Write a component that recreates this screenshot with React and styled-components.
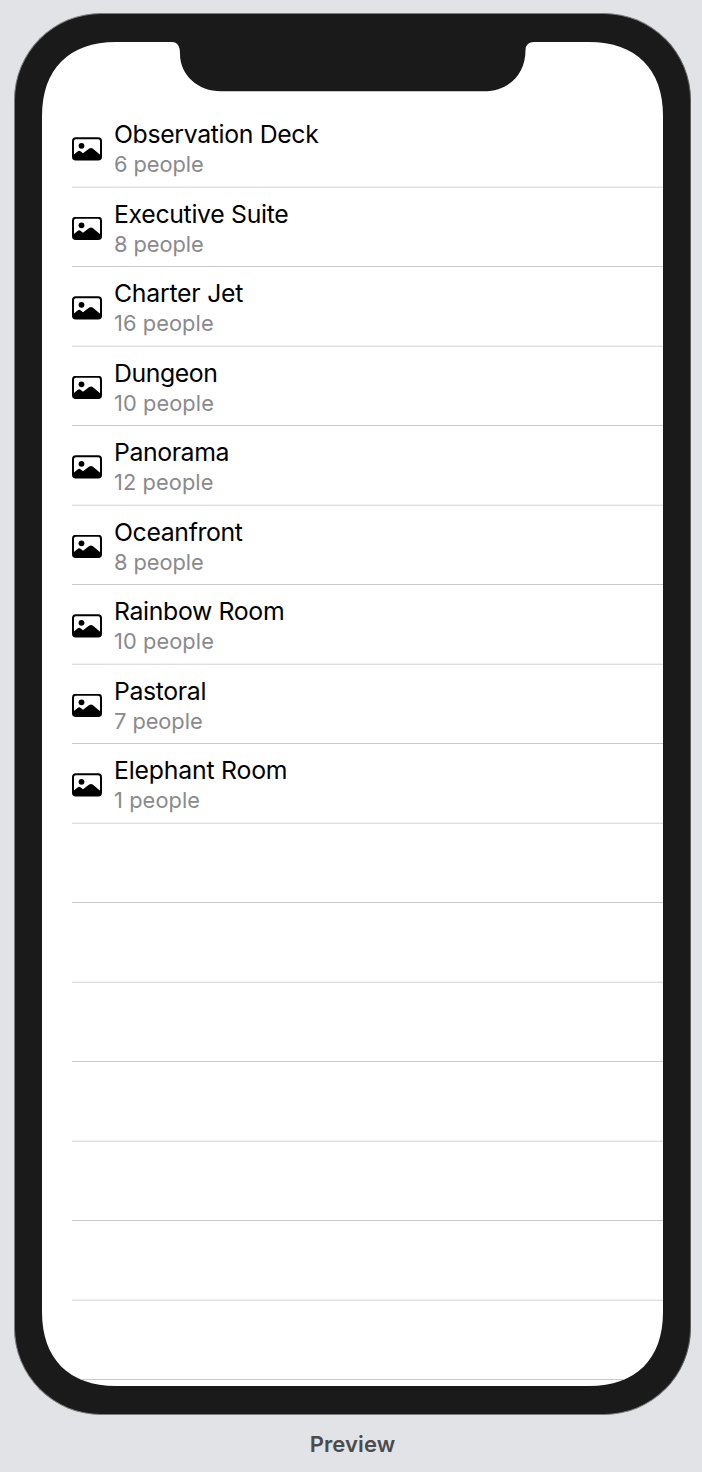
import React from "react";
import styled, { createGlobalStyle } from "styled-components";

const GlobalStyle = createGlobalStyle`
  body {
    margin: 0;
    background: #e2e3e7;
    font-family: Inter, "Liberation Sans", sans-serif;
  }
`;

const Canvas = styled.main`
  box-sizing: border-box;
  width: 702px;
  height: 1472px;
  padding: 13px 11px 0 14px;
  overflow: hidden;
  display: flex;
  flex-direction: column;
`;

const Phone = styled.section`
  box-sizing: border-box;
  position: relative;
  width: 677px;
  height: 1402px;
  padding: 28px;
  border: 1px solid #7b7c7d;
  border-right-color: #5e5e5f;
  border-radius: 87px;
  background: #1a1a1a;
`;

const Notch = styled.svg`
  position: absolute;
  top: 27px;
  left: 155px;
  width: 368px;
  height: 52px;
`;

/* The display has continuous-curvature corners rather than circular ones. */
const Screen = styled.div`
  box-sizing: border-box;
  width: 621px;
  height: 1344px;
  margin-left: -1px;
  padding: 66px 0 0 30px;
  background: #fff;
  clip-path: path(
    "M0 74 C0 27 27 0 74 0 H547 C594 0 621 27 621 74 V1270 C621 1317 594 1344 547 1344 H74 C27 1344 0 1317 0 1270 Z"
  );
`;

const List = styled.ul`
  margin: 0;
  padding: 0;
  list-style: none;
`;

const Row = styled.li`
  box-sizing: border-box;
  display: flex;
  align-items: flex-start;
  gap: 12px;
  height: ${(p) => (p.$soft ? 80 : 79)}px;
  background: ${(p) =>
    p.$soft
      ? "linear-gradient(#f3f3f3 1px, #dedede 1px) bottom / 100% 2px no-repeat"
      : "linear-gradient(#cacacb, #cacacb) bottom / 100% 1px no-repeat"};
`;

const Icon = styled.svg`
  flex: none;
  width: 30px;
  height: 24px;
  margin-top: 29px;
`;

const Labels = styled.div`
  display: flex;
  flex-direction: column;
  padding-top: 10px;
  white-space: nowrap;
`;

const Title = styled.span`
  font-size: 24.8px;
  line-height: 32px;
  letter-spacing: ${(p) => p.$tracking}px;
  color: #000;
`;

const Subtitle = styled.span`
  font-size: 21.8px;
  line-height: 28px;
  letter-spacing: ${(p) => (p.$wide ? 0.08 : -0.05)}px;
  color: #8a8a8d;
`;

const Caption = styled.footer`
  margin-top: 14px;
  text-align: center;
  font-size: 22px;
  font-weight: 600;
  line-height: 30px;
  letter-spacing: 0.1px;
  color: #4b4b4c;
`;

const rooms = [
  { name: "Observation Deck", capacity: 6, tracking: -0.34 },
  { name: "Executive Suite", capacity: 8, tracking: -0.31 },
  { name: "Charter Jet", capacity: 16, tracking: -0.24 },
  { name: "Dungeon", capacity: 10, tracking: -0.42 },
  { name: "Panorama", capacity: 12, tracking: -0.4 },
  { name: "Oceanfront", capacity: 8, tracking: -0.35 },
  { name: "Rainbow Room", capacity: 10, tracking: -0.34 },
  { name: "Pastoral", capacity: 7, tracking: -0.35 },
  { name: "Elephant Room", capacity: 1, tracking: -0.2 },
];

const EMPTY_ROWS = 7;

function PhotoIcon({ raised }) {
  return (
    <Icon viewBox={raised ? "0 0.5 30 24" : "0 0 30 24"}>
      <rect x="1" y="1.2" width="28" height="21.3" rx="2.8" fill="#fff" stroke="#000" strokeWidth="2" />
      <circle cx="9.5" cy="8.8" r="2.9" />
      <path d="M1 18.2 L5.6 14.4 Q7.2 13.1 8.8 14.4 L11 16.3 L17.2 11.6 Q19.1 10.2 21 11.7 L29 18.4 V20.5 Q29 22.6 26.5 22.6 H3.5 Q1 22.6 1 20.5 Z" />
    </Icon>
  );
}

export default function App() {
  return (
    <>
      <GlobalStyle />
      <Canvas>
        <Phone>
          <Screen>
            <List>
              {rooms.map((room, i) => (
                <Row key={room.name} $soft={i % 2 === 0}>
                  <PhotoIcon raised={i % 2 === 1} />
                  <Labels>
                    <Title $tracking={room.tracking}>{room.name}</Title>
                    <Subtitle $wide={String(room.capacity).startsWith("1")}>
                      {room.capacity} people
                    </Subtitle>
                  </Labels>
                </Row>
              ))}
              {Array.from({ length: EMPTY_ROWS }, (_, i) => (
                <Row key={i} $soft={(rooms.length + i) % 2 === 0} />
              ))}
            </List>
          </Screen>
          <Notch viewBox="0 0 368 52">
            <path
              fill="#1a1a1a"
              d="M0 0 H368 V1 H364 Q356 1 355.5 9 C355.5 34 338 50.3 314 50.3 H51 C28 50.3 10 34 10 13 Q10 1 2 1 H0 Z"
            />
          </Notch>
        </Phone>
        <Caption>Preview</Caption>
      </Canvas>
    </>
  );
}
